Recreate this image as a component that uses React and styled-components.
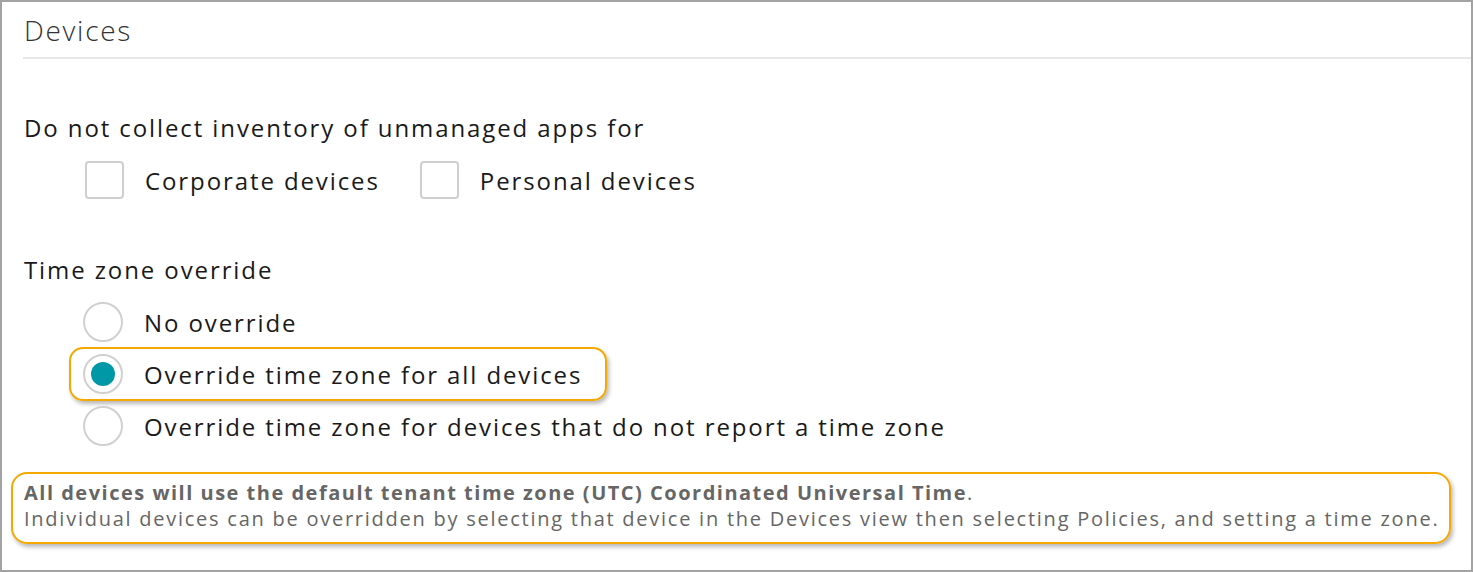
import React from "react";
import styled, {createGlobalStyle} from "styled-components";

const GlobalStyle = createGlobalStyle`
	html, body{
		margin:0;
		padding:0;
		background:#fff;
	}
	body{
		font-family:"Open Sans", "Noto Sans", sans-serif;
		color:#1a1a1a;
	}
`;

const Frame = styled.div`
	width:1473px;
	height:572px;
	box-sizing:border-box;
	border:2px solid #a3a3a3;
	background:#fff;
	overflow:hidden;
`;

const Header = styled.div`
	margin-left:21px;
	height:55px;
	border-bottom:2px solid #e8e8e8;
	display:flex;
	align-items:center;
	h2{
		margin:0;
		padding-left:1px;
		font-size:28px;
		font-weight:300;
		letter-spacing:1.7px;
		color:#333;
		line-height:1;
	}
`;

const Body = styled.div`
	padding:53px 0 0 22px;
	font-size:24px;
	letter-spacing:1.9px;
`;

const Label = styled.div`
	line-height:32px;
	margin-top:${(p) => p.$top || 0}px;
	margin-bottom:${(p) => p.$gap || 0}px;
`;

const CheckRow = styled.div`
	display:flex;
	align-items:center;
	padding-left:61px;
	gap:40px;
	height:40px;
`;

const Check = styled.label`
	display:flex;
	align-items:center;
	gap:21px;
	span.box{
		width:39px;
		height:38px;
		box-sizing:border-box;
		border:2px solid #cfcfcf;
		border-radius:4px;
		background:#fff;
	}
`;

const RadioList = styled.div`
	display:flex;
	flex-direction:column;
	align-items:flex-start;
	padding-left:45px;
	margin-top:10px;
`;

const RadioRow = styled.div`
	display:flex;
	align-items:center;
	gap:21px;
	box-sizing:border-box;
	height:${(p) => (p.$highlight ? 54 : 52)}px;
	margin:${(p) => (p.$highlight ? "-1px 0" : "0")};
	padding:0 23px 0 12px;
	border:2px solid ${(p) => (p.$highlight ? "#f5a800" : "transparent")};
	border-radius:14px;
	box-shadow:${(p) => (p.$highlight ? "2px 3px 4px rgba(0,0,0,0.28)" : "none")};
`;

const Radio = styled.span`
	width:40px;
	height:40px;
	box-sizing:border-box;
	border:2px solid #d0d0d0;
	border-radius:50%;
	display:flex;
	align-items:center;
	justify-content:center;
	background:#fff;
	&::after{
		content:"";
		width:24px;
		height:24px;
		border-radius:50%;
		background:${(p) => (p.$checked ? "#0097a7" : "transparent")};
	}
`;

const Info = styled.div`
	margin:20px 0 0 -13px;
	width:1440px;
	box-sizing:border-box;
	padding:6px 8px 10px 11px;
	border:2px solid #f5a800;
	border-radius:16px;
	box-shadow:2px 3px 4px rgba(0,0,0,0.28);
	color:#666;
	font-size:20px;
	line-height:26px;
	letter-spacing:1.75px;
	white-space:nowrap;
	b{
		font-weight:700;
		letter-spacing:1.5px;
	}
`;

const radios = [
	"No override",
	"Override time zone for all devices",
	"Override time zone for devices that do not report a time zone",
];

const App = () => {
	return(
		<>
		<GlobalStyle/>
		<Frame>
			<Header>
				<h2>Devices</h2>
			</Header>
			<Body>
				<Label $gap={16}>Do not collect inventory of unmanaged apps for</Label>
				<CheckRow>
					<Check><span className="box"></span>Corporate devices</Check>
					<Check><span className="box"></span>Personal devices</Check>
				</CheckRow>
				<Label $top={54}>Time zone override</Label>
				<RadioList>
					{radios.map((r, i) => (
						<RadioRow key={r} $highlight={i === 1}>
							<Radio $checked={i === 1}/>
							{r}
						</RadioRow>
					))}
				</RadioList>
				<Info>
					<div><b>All devices will use the default tenant time zone (UTC) Coordinated Universal Time</b>.</div>
					<div>Individual devices can be overridden by selecting that device in the Devices view then selecting Policies, and setting a time zone.</div>
				</Info>
			</Body>
		</Frame>
		</>
	);
};

export default App;
